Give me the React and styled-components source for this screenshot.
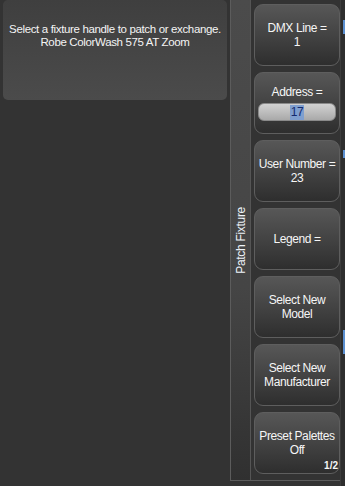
import React from "react";
import styled, { createGlobalStyle } from "styled-components";

const GlobalStyle = createGlobalStyle`
  html, body {
    margin: 0;
    padding: 0;
    background: #333333;
  }
  body {
    font-family: "Liberation Sans", Tahoma, Arial, sans-serif;
    font-size: 12px;
    color: #f4f4f4;
  }
`;

const buttons = [
  { label: "DMX Line =", value: "1" },
  { label: "Address =", input: "17" },
  { label: "User Number =", value: "23" },
  { label: "Legend =" },
  { label: "Select New", value: "Model" },
  { label: "Select New", value: "Manufacturer" },
  { label: "Preset Palettes", value: "Off", page: "1/2" },
];

function App() {
  return (
    <Screen>
      <GlobalStyle />
      <Workspace>
        <Message>
          Select a fixture handle to patch or exchange.
          <br />
          Robe ColorWash 575 AT Zoom
        </Message>
      </Workspace>
      <SoftKeys>
        <TitleStrip>
          <TitleText>Patch Fixture</TitleText>
        </TitleStrip>
        <ButtonColumn>
          {buttons.map((b, i) => (
            <SoftButton key={i}>
              <span>{b.label}</span>
              {b.value && <span>{b.value}</span>}
              {b.input && (
                <ValueField>
                  <Selected>{b.input}</Selected>
                </ValueField>
              )}
              {b.page && <PageNo>{b.page}</PageNo>}
            </SoftButton>
          ))}
        </ButtonColumn>
      </SoftKeys>
      <EdgePanel>
        <EdgeMark $top={20} $h={14} />
        <EdgeMark $top={150} $h={8} />
        <EdgeMark $top={330} $h={24} />
      </EdgePanel>
    </Screen>
  );
}

const Screen = styled.div`
  display: flex;
  width: 345px;
  height: 486px;
  background: #333333;
  overflow: hidden;
`;

const Workspace = styled.div`
  width: 230px;
  padding: 0 3px;
  box-sizing: border-box;
`;

const Message = styled.div`
  height: 100px;
  border-radius: 5px;
  background: linear-gradient(#3f3f3f, #4b4b4b);
  padding-top: 23px;
  box-sizing: border-box;
  text-align: center;
  white-space: nowrap;
  line-height: 13px;
  font-size: 11.5px;
  letter-spacing: -0.35px;
`;

const SoftKeys = styled.div`
  display: flex;
  width: 110px;
  height: 481px;
  border-left: 1px solid #5c5c5c;
  border-bottom: 1px solid #5c5c5c;
  box-sizing: border-box;
`;

const TitleStrip = styled.div`
  width: 19px;
  border-right: 1px solid #555555;
  background: linear-gradient(#4b4b4b, #454545 60%, #303030);
  display: flex;
  align-items: center;
  justify-content: center;
`;

const TitleText = styled.div`
  writing-mode: vertical-rl;
  transform: rotate(180deg);
  white-space: nowrap;
  font-size: 12px;
  letter-spacing: -0.3px;
  color: #eef4fa;
`;

const ButtonColumn = styled.div`
  display: flex;
  flex-direction: column;
  gap: 6px;
  padding: 4px 0 0 3px;
`;

const SoftButton = styled.div`
  position: relative;
  width: 86px;
  height: 62px;
  box-sizing: border-box;
  border: 1px solid #5e5e5e;
  border-radius: 9px;
  background: linear-gradient(#575757, #414141 55%, #2e2e2e);
  display: flex;
  flex-direction: column;
  align-items: center;
  justify-content: center;
  text-align: center;
  line-height: 14px;
  font-size: 12px;
  letter-spacing: -0.4px;
  color: #f6f6f6;
  white-space: nowrap;
`;

const ValueField = styled.div`
  margin-top: 4px;
  width: 78px;
  height: 18px;
  border-radius: 6px;
  border: 1px solid #8a8a8a;
  box-sizing: border-box;
  background: linear-gradient(#d2d2d2, #a9a9a9);
  display: flex;
  align-items: center;
  justify-content: center;
`;

const Selected = styled.span`
  background: #7f9fcf;
  color: #142a6e;
  padding: 0 1px;
  line-height: 15px;
`;

const PageNo = styled.span`
  position: absolute;
  right: 1px;
  bottom: 2px;
  font-size: 10px;
  font-weight: bold;
  line-height: 10px;
  letter-spacing: 0;
`;

const EdgePanel = styled.div`
  position: relative;
  flex: 1;
  border-left: 1px solid #3c3c3c;
  background: #2e2e2e;
`;

const EdgeMark = styled.div`
  position: absolute;
  left: 2px;
  top: ${(p) => p.$top}px;
  width: 2px;
  height: ${(p) => p.$h}px;
  background: #5b8fd0;
`;

export default App;
